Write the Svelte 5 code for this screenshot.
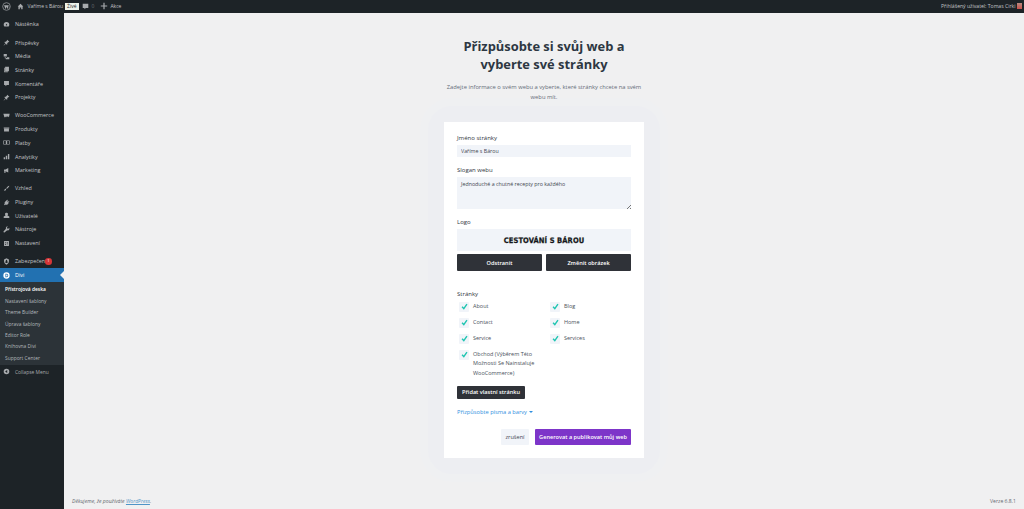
<script>
	const groups = [
		[{ label: 'Nástěnka', icon: 'gauge' }],
		[
			{ label: 'Příspěvky', icon: 'pin' },
			{ label: 'Média', icon: 'media' },
			{ label: 'Stránky', icon: 'page' },
			{ label: 'Komentáře', icon: 'comment' },
			{ label: 'Projekty', icon: 'pin' }
		],
		[
			{ label: 'WooCommerce', icon: 'woo' },
			{ label: 'Produkty', icon: 'box' },
			{ label: 'Platby', icon: 'money' },
			{ label: 'Analytiky', icon: 'chart' },
			{ label: 'Marketing', icon: 'mega' }
		],
		[
			{ label: 'Vzhled', icon: 'brush' },
			{ label: 'Pluginy', icon: 'plug' },
			{ label: 'Uživatelé', icon: 'user' },
			{ label: 'Nástroje', icon: 'wrench' },
			{ label: 'Nastavení', icon: 'sliders' }
		]
	];

	const icons = {
		gauge: 'M10 3a8 8 0 0 0-8 8c0 2 .7 3.800 2 5h12c1.300-1.200 2-3 2-5a8 8 0 0 0-8-8zm0 4.500L12 11a2 2 0 1 1-4 0z',
		pin: 'M12 2l6 6-1.500 1-1-.5-3.500 3.500.5 3-1.500 1.500-3-3-4.500 4.500-1.500.5.500-1.500 4.500-4.500-3-3L5 7.500l3 .5 3.500-3.500-.5-1z',
		media: 'M2 3h9v7H2zm3 9h3v2h3v-2h7v6H8v-3H5z',
		page: 'M6 2h11v13H6zM3 5h2v11h9v2H3z',
		comment: 'M3 3h14v11H11l-4 4v-4H3z',
		woo: 'M1 5h18l-2 10-3.500-3-2.500 3-2-3-2.500 3H4z',
		box: 'M2 4h16v3H2zm1 4h14v8H3z',
		money: 'M1 4h18v12H1zm2 2v8h14V6zm5 0h4v8H8z',
		chart: 'M2 12h4v6H2zm6-4h4v10H8zm6-5h4v15h-4z',
		mega: 'M3 7h4l8-4v13l-8-4v5H4v-5H3z',
		brush: 'M18 2c0 3-5 8-8 9l-1-1c1-3 6-8 9-8zM8 11l1 1c0 3-3 5-7 5 2-1 2-2 2-3s2-3 4-3z',
		plug: 'M12 2l2 1-2 4 3 1 2-3 1 2-3 4 1 1-3 4c-2 1-4 1-5 0l-3 2-2-2 2-3c-1-2 0-4 1-5z',
		user: 'M10 2a4 4 0 0 1 3 7v1l5 3v4H2v-4l5-3V9a4 4 0 0 1 3-7z',
		wrench: 'M18 5l-3 3-3-1-1-3 3-2c-3-1-6 1-6 4l.5 2L2 15a2 2 0 0 0 3 3l7-6 2 .5c3 0 5-3 4-7.500z',
		sliders: 'M3 3h14v14H3zm3 3v2h2V6zm5 0v5h2V6zm-5 5v3h2v-3zm5 2v1h2v-1z'
	};

	const submenu = ['Přístrojová deska', 'Nastavení šablony', 'Theme Builder', 'Úprava šablony', 'Editor Role', 'Knihovna Divi', 'Support Center'];
	const pages = ['About', 'Blog', 'Contact', 'Home', 'Service', 'Services', 'Obchod (Výběrem Této Možnosti Se Nainstaluje WooCommerce)'];
</script>

<div class="topbar">
	<div class="top-left">
		<svg class="wp" viewBox="0 0 20 20"><circle cx="10" cy="10" r="8.500" fill="none" stroke="currentColor" stroke-width="1.500" /><path d="M4.500 7l3.500 9 2-6-1-3zM9 7h6l-3 9-1.500-4.500zM15.500 7.500c1.500 2.500 1 5.500-1 7.500l1-4z" fill="currentColor" /></svg>
		<svg class="home" viewBox="0 0 20 20"><path d="M10 2l8 8h-2v8h-4v-5H8v5H4v-8H2z" fill="currentColor" /></svg>
		<span class="site">Vaříme s Bárou</span>
		<span class="live">Živé</span>
		<svg class="bubble" viewBox="0 0 20 20"><path d="M2 2h16v12h-7l-4 4v-4H2z" fill="currentColor" /></svg>
		<span class="count">0</span>
		<svg class="plus" viewBox="0 0 20 20"><path d="M8.500 2h3v6.500H18v3h-6.500V18h-3v-6.500H2v-3h6.500z" fill="currentColor" /></svg>
		<span>Akce</span>
	</div>
	<div class="top-right">
		<span>Přihlášený uživatel: Tomas Cirki</span>
		<span class="avatar"></span>
	</div>
</div>

<div class="shell">
	<aside class="sidebar">
		{#each groups as group}
			<ul class="group">
				{#each group as item}
					<li class="item">
						<svg viewBox="0 0 20 20"><path d={icons[item.icon]} fill="currentColor" fill-rule="evenodd" /></svg>
						<span>{item.label}</span>
					</li>
				{/each}
			</ul>
		{/each}
		<ul class="group last">
			<li class="item">
				<svg viewBox="0 0 20 20"><path d="M10 1l7 3v5c0 4-3 8-7 10-4-2-7-6-7-10V4zm-3 8h6v5H7zm1 0V7a2 2 0 0 1 4 0v2z" fill="currentColor" fill-rule="evenodd" /></svg>
				<span class="sec">Zabezpečení<b class="badge">1</b></span>
			</li>
			<li class="item active">
				<svg viewBox="0 0 20 20"><path d="M10 1a9 9 0 1 0 0 18 9 9 0 0 0 0-18zM7 5h3a5 5 0 0 1 0 10H7zm2 2v6h1a3 3 0 0 0 0-6z" fill="currentColor" fill-rule="evenodd" /></svg>
				<span>Divi</span>
			</li>
		</ul>
		<ul class="sub">
			{#each submenu as link, i}
				<li class:current={i === 0}>{link}</li>
			{/each}
		</ul>
		<div class="item collapse">
			<svg viewBox="0 0 20 20"><path d="M10 2a8 8 0 1 0 0 16 8 8 0 0 0 0-16zm2 4v8L6 10z" fill="currentColor" fill-rule="evenodd" /></svg>
			<span>Collapse Menu</span>
		</div>
	</aside>

	<main class="content">
		<div class="wizard">
			<h1>Přizpůsobte si svůj web a<br />vyberte své stránky</h1>
			<p class="lead">Zadejte informace o svém webu a vyberte, které stránky chcete na svém webu mít.</p>

			<form class="card">
				<label class="field-label" for="site-name">Jméno stránky</label>
				<input id="site-name" class="input" value="Vaříme s Bárou" />

				<label class="field-label slogan-label" for="slogan">Slogan webu</label>
				<div class="textarea-wrap">
					<textarea id="slogan" class="input area">Jednoduché a chutné recepty pro každého</textarea>
				</div>

				<div class="field-label logo-label">Logo</div>
				<div class="logo"><span>CESTOVÁNÍ S BÁROU</span></div>
				<div class="logo-actions">
					<button type="button" class="dark">Odstranit</button>
					<button type="button" class="dark">Změnit obrázek</button>
				</div>

				<div class="field-label pages-label">Stránky</div>
				<div class="pages">
					{#each pages as page}
						<div class="page">
							<span class="check">
								<svg viewBox="0 0 10 10"><path d="M1.500 5.500L4 8l4.500-6.500" fill="none" stroke="#1fc5b1" stroke-width="2" /></svg>
							</span>
							<span class="page-name">{page}</span>
						</div>
					{/each}
				</div>

				<button type="button" class="dark add">Přidat vlastní stránku</button>
				<div class="customize">Přizpůsobte písma a barvy <i></i></div>

				<div class="footer-actions">
					<button type="button" class="cancel">zrušení</button>
					<button type="button" class="generate">Generovat a publikovat můj web</button>
				</div>
			</form>
		</div>

		<footer class="page-foot">
			<em>Děkujeme, že používáte <a href="#top">WordPress</a>.</em>
			<span>Verze 6.8.1</span>
		</footer>
	</main>
</div>

<style>
	:global(body) {
		background: #f0f0f1;
		font-family: 'Open Sans', sans-serif;
	}

	.topbar {
		height: 12.500px;
		background: #1d2327;
		color: #c3c4c7;
		font-size: 5px;
		display: flex;
		justify-content: space-between;
		align-items: center;
	}

	.top-left,
	.top-right {
		display: flex;
		align-items: center;
	}

	.wp {
		width: 9px;
		height: 9px;
		margin-left: 2px;
		color: #a7aaad;
	}

	.home {
		width: 7px;
		height: 7px;
		margin: 0 3.500px 0 6px;
		color: #a7aaad;
	}

	.live {
		background: #eef3ea;
		color: #1d2327;
		padding: 0 2px;
		line-height: 7px;
		margin: 0 3px 0 2px;
	}

	.bubble {
		width: 7px;
		height: 7px;
		color: #a7aaad;
	}

	.count {
		margin: 0 6px 0 3px;
		color: #6a6f74;
	}

	.plus {
		width: 8px;
		height: 8px;
		margin-right: 2px;
		color: #a7aaad;
	}

	.top-right {
		gap: 1.500px;
		margin-right: 2px;
		font-size: 5.100px;
	}

	.avatar {
		width: 5px;
		height: 6px;
		background: linear-gradient(#b98a80, #c9504a);
	}

	.shell {
		display: flex;
		height: 496.500px;
	}

	.sidebar {
		width: 64px;
		flex: none;
		background: #1d2327;
		color: #c3c4c7;
		font-size: 5.400px;
		padding-top: 5px;
		box-sizing: border-box;
	}

	ul {
		list-style: none;
		margin: 0;
		padding: 0;
	}

	.group {
		margin-bottom: 4.500px;
	}

	.group.last {
		margin-bottom: 0;
	}

	.item {
		height: 13.700px;
		display: flex;
		align-items: center;
		gap: 5px;
		padding-left: 3px;
		box-sizing: border-box;
		position: relative;
	}

	.item svg {
		width: 7px;
		height: 7px;
		flex: none;
		color: #a7aaad;
	}

	.sec {
		display: flex;
		align-items: center;
	}

	.badge {
		width: 6.500px;
		height: 6.500px;
		border-radius: 50%;
		background: #d63638;
		color: #fff;
		font-size: 4px;
		font-weight: 400;
		text-align: center;
		line-height: 6.500px;
		margin-left: -1.500px;
	}

	.active {
		background: #2271b1;
		color: #fff;
	}

	.active svg {
		color: #fff;
	}

	.active::after {
		content: '';
		position: absolute;
		right: 0;
		top: 3px;
		border: 4px solid transparent;
		border-right-color: #f0f0f1;
		border-left-width: 0;
	}

	.sub {
		background: #2c3338;
		padding: 2.500px 0 1px 5px;
		font-size: 4.900px;
		color: #b4b9be;
	}

	.sub li {
		height: 11.400px;
		line-height: 11.400px;
	}

	.current {
		color: #fff;
		font-weight: 600;
	}

	.collapse {
		font-size: 4.900px;
		color: #a7aaad;
	}

	.content {
		flex: 1;
		display: flex;
		flex-direction: column;
	}

	.wizard {
		flex: 1;
		display: flex;
		flex-direction: column;
		align-items: center;
		padding-top: 24px;
	}

	h1 {
		margin: 0;
		font-size: 12.900px;
		line-height: 18px;
		font-weight: 700;
		color: #2d3742;
		text-align: center;
	}

	.lead {
		width: 200px;
		margin: 9px 0 0;
		font-size: 5.800px;
		line-height: 10px;
		font-weight: 500;
		color: #646c78;
		text-align: center;
		position: relative;
		z-index: 1;
	}

	.card {
		width: 200px;
		height: 336px;
		box-sizing: border-box;
		margin-top: 20px;
		padding: 13px 13px 0;
		background: #fff;
		font-size: 5.600px;
		color: #3f4650;
		position: relative;
		z-index: 0;
	}

	/* soft double halo behind the card */
	.card::before,
	.card::after {
		content: '';
		position: absolute;
		z-index: -1;
	}

	.card::before {
		inset: -16px;
		border-radius: 24px;
		background: #edeef2;
		box-shadow: 0 0 0 8px #eff0f2;
	}

	.card::after {
		inset: 0;
		background: #fff;
	}

	.field-label {
		display: block;
		line-height: 7px;
		font-size: 6px;
		color: #2f3640;
	}

	.input {
		display: block;
		width: 100%;
		height: 12px;
		margin-top: 3px;
		padding: 0 4px;
		box-sizing: border-box;
		border: 0;
		outline: 0;
		background: #f1f4f9;
		font: 5.300px 'Open Sans', sans-serif;
		color: #3f4650;
	}

	.slogan-label {
		margin-top: 10px;
	}

	.textarea-wrap {
		position: relative;
	}

	.textarea-wrap::after {
		content: '';
		position: absolute;
		right: 0;
		bottom: 0;
		width: 4px;
		height: 4px;
		background: linear-gradient(135deg, transparent 50%, #777 50%, #777 62%, transparent 62%, transparent 76%, #777 76%, #777 88%, transparent 88%);
	}

	.area {
		height: 32px;
		padding-top: 3px;
		resize: none;
		overflow: hidden;
	}

	.logo-label {
		margin-top: 10px;
	}

	.logo {
		height: 22px;
		margin-top: 3.500px;
		background: #f1f4f9;
		display: flex;
		align-items: center;
		justify-content: center;
		font-family: 'DejaVu Sans', sans-serif;
		font-stretch: condensed;
		font-weight: 700;
		font-size: 7.500px;
		letter-spacing: 0.100px;
		-webkit-text-stroke: 0.25px #15171a;
		color: #15171a;
	}

	.logo-actions {
		display: grid;
		grid-template-columns: 1fr 1fr;
		gap: 4px;
		margin-top: 3px;
	}

	button {
		font-family: 'Open Sans', sans-serif;
		border: 0;
		padding: 0;
		border-radius: 1px;
		font-size: 5.600px;
		font-weight: 600;
	}

	.dark {
		background: #2f3238;
		color: #fff;
		height: 17px;
	}

	.pages-label {
		margin-top: 19.500px;
	}

	.pages {
		display: grid;
		grid-template-columns: 91px 1fr;
		row-gap: 6px;
		margin-top: 4px;
		padding-left: 2px;
	}

	.page {
		display: flex;
		gap: 4px;
		font-size: 5.500px;
		line-height: 9.700px;
		color: #4a515b;
	}

	.page:last-child {
		grid-column: 1;
		width: 78px;
	}

	.check {
		flex: none;
		width: 10px;
		height: 10px;
		background: #f1f4f9;
		border-radius: 1px;
		display: flex;
		align-items: center;
		justify-content: center;
	}

	.check svg {
		width: 7px;
		height: 7px;
	}

	.add {
		display: block;
		width: 68px;
		height: 13px;
		margin-top: 7px;
	}

	.customize {
		margin-top: 9px;
		font-size: 5.700px;
		line-height: 8px;
		font-weight: 500;
		color: #2f8fe0;
	}

	.customize i {
		display: inline-block;
		margin-left: 1px;
		vertical-align: 1px;
		border: 2px solid transparent;
		border-top-color: #2f8fe0;
		border-bottom-width: 0;
	}

	.footer-actions {
		display: flex;
		justify-content: flex-end;
		gap: 6px;
		margin-top: 13px;
	}

	.footer-actions button {
		height: 16px;
	}

	.cancel {
		width: 28px;
		background: #f1f4f9;
		color: #3f4650;
		font-weight: 500;
	}

	.generate {
		width: 96px;
		background: #7d35c9;
		color: #fff;
	}

	.page-foot {
		display: flex;
		justify-content: space-between;
		padding: 0 8px 4px;
		font-size: 5.100px;
		line-height: 8px;
		color: #646970;
	}

	.page-foot a {
		color: #4f94c7;
	}
</style>
